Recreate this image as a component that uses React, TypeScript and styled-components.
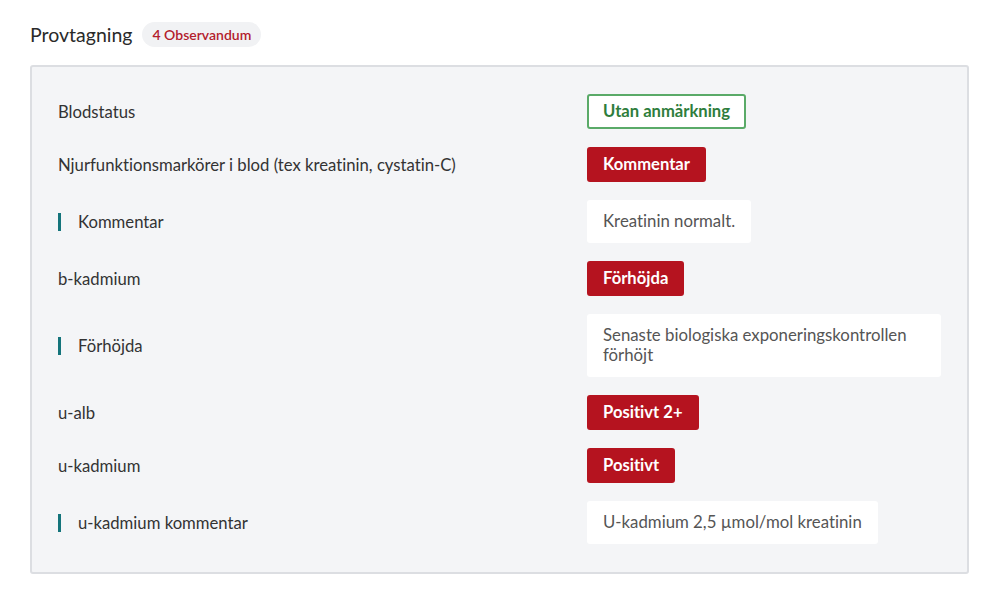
import { FC, Fragment } from 'react'
import styled, { createGlobalStyle, css } from 'styled-components'

type Answer =
	| { kind: 'ok'; text: string }
	| { kind: 'flag'; text: string }
	| { kind: 'note'; text: string }

type Row = {
	label: string
	nested?: boolean
	answer: Answer
}

const rows: Row[] = [
	{ label: 'Blodstatus', answer: { kind: 'ok', text: 'Utan anmärkning' } },
	{
		label: 'Njurfunktionsmarkörer i blod (tex kreatinin, cystatin-C)',
		answer: { kind: 'flag', text: 'Kommentar' }
	},
	{ label: 'Kommentar', nested: true, answer: { kind: 'note', text: 'Kreatinin normalt.' } },
	{ label: 'b-kadmium', answer: { kind: 'flag', text: 'Förhöjda' } },
	{
		label: 'Förhöjda',
		nested: true,
		answer: { kind: 'note', text: 'Senaste biologiska exponeringskontrollen förhöjt' }
	},
	{ label: 'u-alb', answer: { kind: 'flag', text: 'Positivt 2+' } },
	{ label: 'u-kadmium', answer: { kind: 'flag', text: 'Positivt' } },
	{
		label: 'u-kadmium kommentar',
		nested: true,
		answer: { kind: 'note', text: 'U-kadmium 2,5 µmol/mol kreatinin' }
	}
]

const App: FC = () => {
	return (
		<>
			<GlobalStyle />
			<Section>
				<Header>
					<Title>Provtagning</Title>
					<Count>4 Observandum</Count>
				</Header>
				<Panel>
					{rows.map((row) => (
						<Fragment key={row.label + row.answer.text}>
							<Label nested={row.nested}>{row.label}</Label>
							<Value>
								{row.answer.kind === 'note' ? (
									<Note>{row.answer.text}</Note>
								) : (
									<Tag kind={row.answer.kind}>{row.answer.text}</Tag>
								)}
							</Value>
						</Fragment>
					))}
				</Panel>
			</Section>
		</>
	)
}

const GlobalStyle = createGlobalStyle`
	body {
		margin: 0;
		background: #ffffff;
		font-family: Lato, 'Noto Sans', sans-serif;
		font-variant-ligatures: none;
		color: #333333;
	}
`

const Section = styled.section`
	padding: 22px 28px 0 30px;
	width: 939px;
`

const Header = styled.div`
	align-items: center;
	display: flex;
	gap: 10px;
	margin-bottom: 18px;
`

const Title = styled.h2`
	color: #2a2a2a;
	font-size: 19.5px;
	font-weight: 400;
	margin: 0;
`

const Count = styled.span`
	background: #f1f2f4;
	border-radius: 13px;
	color: #b3202c;
	font-size: 14px;
	font-weight: 600;
	line-height: 25px;
	padding: 0 10px;
`

const Panel = styled.div`
	background: #f4f5f7;
	border: 2px solid #dcdee2;
	border-radius: 3px;
	display: grid;
	grid-template-columns: 529px 1fr;
	padding: 27px 26px 28px 26px;
	row-gap: 18px;
`

const Label = styled.div<{ nested?: boolean }>`
	align-items: center;
	color: #333333;
	display: flex;
	font-size: 16.7px;
	${(props) =>
		props.nested &&
		css`
			&::before {
				background: #14747b;
				content: '';
				height: 18px;
				margin-right: 17px;
				width: 3px;
			}
		`}
`

const Value = styled.div`
	align-items: flex-start;
	display: flex;
`

const Tag = styled.span<{ kind: 'ok' | 'flag' }>`
	border-radius: 3px;
	font-size: 16.6px;
	font-weight: 700;
	line-height: 31px;
	padding: 0 14px;
	${(props) =>
		props.kind === 'ok'
			? css`
					background: #ffffff;
					border: 2px solid #5aaa68;
					color: #2e7d3c;
			  `
			: css`
					background: #b5131f;
					border: 2px solid #b5131f;
					color: #ffffff;
			  `}
`

const Note = styled.div`
	background: #ffffff;
	border-radius: 3px;
	color: #555555;
	font-size: 16.8px;
	line-height: 20px;
	padding: 11px 16px 12px 16px;
`

export default App
